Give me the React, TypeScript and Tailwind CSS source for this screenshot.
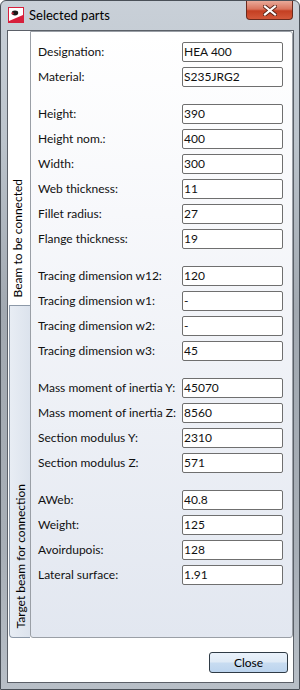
import React from "react";

type Row = { label: string; value: string };

const GROUPS: Row[][] = [
  [
    { label: "Designation:", value: "HEA 400" },
    { label: "Material:", value: "S235JRG2" },
  ],
  [
    { label: "Height:", value: "390" },
    { label: "Height nom.:", value: "400" },
    { label: "Width:", value: "300" },
    { label: "Web thickness:", value: "11" },
    { label: "Fillet radius:", value: "27" },
    { label: "Flange thickness:", value: "19" },
  ],
  [
    { label: "Tracing dimension w12:", value: "120" },
    { label: "Tracing dimension w1:", value: "-" },
    { label: "Tracing dimension w2:", value: "-" },
    { label: "Tracing dimension w3:", value: "45" },
  ],
  [
    { label: "Mass moment of inertia Y:", value: "45070" },
    { label: "Mass moment of inertia Z:", value: "8560" },
    { label: "Section modulus Y:", value: "2310" },
    { label: "Section modulus Z:", value: "571" },
  ],
  [
    { label: "AWeb:", value: "40.8" },
    { label: "Weight:", value: "125" },
    { label: "Avoirdupois:", value: "128" },
    { label: "Lateral surface:", value: "1.91" },
  ],
];

const FONT = "[font-family:Lato,'Noto_Sans',sans-serif]";

function TitleIcon() {
  return (
    <svg width="16" height="16" viewBox="0 0 16 16" aria-hidden>
      <rect x="0" y="0" width="16" height="16" fill="#d71f3c" />
      <polygon points="1,1 15,1 15,8 1,14" fill="#ffffff" />
      <ellipse cx="7" cy="6" rx="3.2" ry="2.4" fill="#1a1a1a" />
      <ellipse cx="4.6" cy="6.4" rx="1.2" ry="1.1" fill="#c0243a" />
    </svg>
  );
}

function CloseX() {
  return (
    <svg width="14" height="11" viewBox="0 0 14 11" aria-hidden>
      <path d="M2 1.5 L12 9.5 M12 1.5 L2 9.5" stroke="#5a2418" strokeWidth="4" strokeLinecap="square" />
      <path d="M2 1.5 L12 9.5 M12 1.5 L2 9.5" stroke="#ffffff" strokeWidth="2.2" strokeLinecap="square" />
    </svg>
  );
}

function Field({ row }: { row: Row }) {
  return (
    <div className="grid grid-cols-[144px_101px] items-center h-[20px]">
      <span className="text-[12px] leading-[20px] text-[#111] whitespace-nowrap">{row.label}</span>
      <div className="h-[20px] w-[101px] rounded-[2px] border border-[#6f6f6f] bg-white pl-[1px] text-[12px] leading-[18px] text-[#111]">
        {row.value}
      </div>
    </div>
  );
}

export default function App() {
  return (
    <div
      className={`relative flex h-[690px] w-[300px] flex-col rounded-t-[6px] border border-[#4a5058] bg-[linear-gradient(180deg,#c9d0d8_0%,#bcc4cc_20%,#a2a9b1_45%,#a8afb7_80%,#b8bfc7_100%)] ${FONT}`}
    >
      {/* title bar */}
      <div className="flex h-[29px] items-start pl-[7px] pt-[6px]">
        <TitleIcon />
        <span className="ml-[5px] text-[13px] leading-[16px] text-black">Selected parts</span>
      </div>
      <div className="absolute right-[6px] top-0 flex h-[19px] w-[47px] items-center justify-center rounded-b-[4px] border border-t-0 border-[#6b2a1d] bg-[linear-gradient(180deg,#e9a999_0%,#d9745d_45%,#c43f22_55%,#d3583a_100%)]">
        <CloseX />
      </div>

      {/* client area */}
      <div className="mb-[6px] ml-[6px] mr-[5px] flex flex-1 flex-col border border-[#5b6068] bg-white">
        <div className="flex h-[607px]">
          {/* vertical tabs */}
          <div className="flex w-[22px] flex-col">
            <div className="flex flex-1 items-end justify-center pb-[8px] pr-[2px]">
              <span className="rotate-180 text-[12px] leading-[14px] text-black [writing-mode:vertical-rl] whitespace-nowrap">
                Beam to be connected
              </span>
            </div>
            <div className="ml-[1px] flex h-[333px] items-end justify-center rounded-bl-[4px] border border-r-0 border-[#8d99a8] bg-[linear-gradient(90deg,#e8edf4,#dce3ed)] pb-[9px] pl-[1px]">
              <span className="rotate-180 text-[12px] leading-[14px] text-black [writing-mode:vertical-rl] whitespace-nowrap">
                Target beam for connection
              </span>
            </div>
          </div>
          {/* panel */}
          <div className="flex flex-1 flex-col gap-[17px] rounded-b-[3px] rounded-tr-[3px] border border-[#9a9fa6] bg-[linear-gradient(180deg,#ffffff_0%,#f7f8fb_30%,#e2e7f0_100%)] pl-[7px] pt-[10px]">
            {GROUPS.map((group, gi) => (
              <div key={gi} className="flex flex-col gap-[5px]">
                {group.map((row) => (
                  <Field key={row.label} row={row} />
                ))}
              </div>
            ))}
          </div>
        </div>
        {/* footer */}
        <div className="flex justify-end pr-[5px] pt-[14px]">
          <button
            type="button"
            className="h-[21px] w-[79px] rounded-[3px] border border-[#2f3b46] bg-[linear-gradient(180deg,#eaf2fb_0%,#dfeaf6_48%,#c8dcf1_52%,#bcd4ee_100%)] text-[12px] leading-[19px] text-black"
          >
            Close
          </button>
        </div>
      </div>
    </div>
  );
}
